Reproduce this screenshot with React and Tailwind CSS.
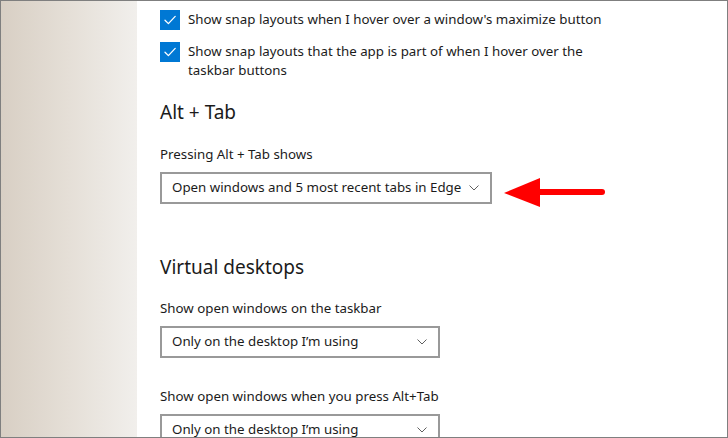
const font = { fontFamily: '"Segoe UI", "Noto Sans", "Liberation Sans", sans-serif' };

function Check({ children }) {
  return (
    <div className="flex items-start gap-[8px]">
      <div className="w-[20px] h-[20px] shrink-0 bg-[#0078d4] flex items-center justify-center">
        <svg width="14" height="14" viewBox="0 0 14 14" fill="none">
          <path d="M2 7.2 L5.4 10.6 L12.2 3.4" stroke="white" strokeWidth="1.3" strokeLinecap="round" strokeLinejoin="round" />
        </svg>
      </div>
      <p className="text-[13.3px] leading-[19px] text-[#1b1b1b] w-[420px]">{children}</p>
    </div>
  );
}

function Select({ value, width }) {
  return (
    <div className={`${width} h-[32px] border-2 border-[#999999] flex items-center justify-between pl-[10px] pr-[11px]`}>
      <span className="text-[13.3px] text-[#1b1b1b] whitespace-nowrap">{value}</span>
      <svg width="10" height="6" viewBox="0 0 10 6" fill="none">
        <path d="M0.5 0.5 L5 5 L9.5 0.5" stroke="#606060" strokeWidth="1" />
      </svg>
    </div>
  );
}

export default function App() {
  return (
    <div className="w-[728px] h-[438px] border border-[#7f7f7f] flex overflow-hidden bg-white" style={font}>
      <div className="w-[136px] shrink-0 bg-gradient-to-r from-[#d8cfc4] via-[#e5dfd7] to-[#f1efec]" />
      <div className="flex-1 relative pl-[23px]">
        <div className="flex flex-col gap-[12px] mt-[-23px]">
          <Check>When I snap a window, suggest what I can snap next to it</Check>
          <Check>Show snap layouts when I hover over a window's maximize button</Check>
          <Check>Show snap layouts that the app is part of when I hover over the taskbar buttons</Check>
        </div>

        <h2 className="text-[19px] leading-[28px] text-[#1b1b1b] mt-[18px]">Alt + Tab</h2>
        <p className="text-[13.3px] leading-[20px] text-[#1b1b1b] mt-[18px]">Pressing Alt + Tab shows</p>
        <div className="mt-[8px]">
          <Select value="Open windows and 5 most recent tabs in Edge" width="w-[332px]" />
        </div>

        <h2 className="text-[19px] leading-[28px] text-[#1b1b1b] mt-[49px]">Virtual desktops</h2>
        <p className="text-[13.3px] leading-[20px] text-[#1b1b1b] mt-[17px]">Show open windows on the taskbar</p>
        <div className="mt-[8px]">
          <Select value="Only on the desktop I’m using" width="w-[280px]" />
        </div>
        <p className="text-[13.3px] leading-[20px] text-[#1b1b1b] mt-[28px]">Show open windows when you press Alt+Tab</p>
        <div className="mt-[8px]">
          <Select value="Only on the desktop I’m using" width="w-[280px]" />
        </div>

        <svg className="absolute left-[367px] top-[176px]" width="104" height="32" viewBox="0 0 104 32">
          <polygon points="0,16 36,1 36,30" fill="#ff0000" />
          <line x1="30" y1="15" x2="98" y2="15" stroke="#ff0000" strokeWidth="6" strokeLinecap="round" />
        </svg>
      </div>
    </div>
  );
}
